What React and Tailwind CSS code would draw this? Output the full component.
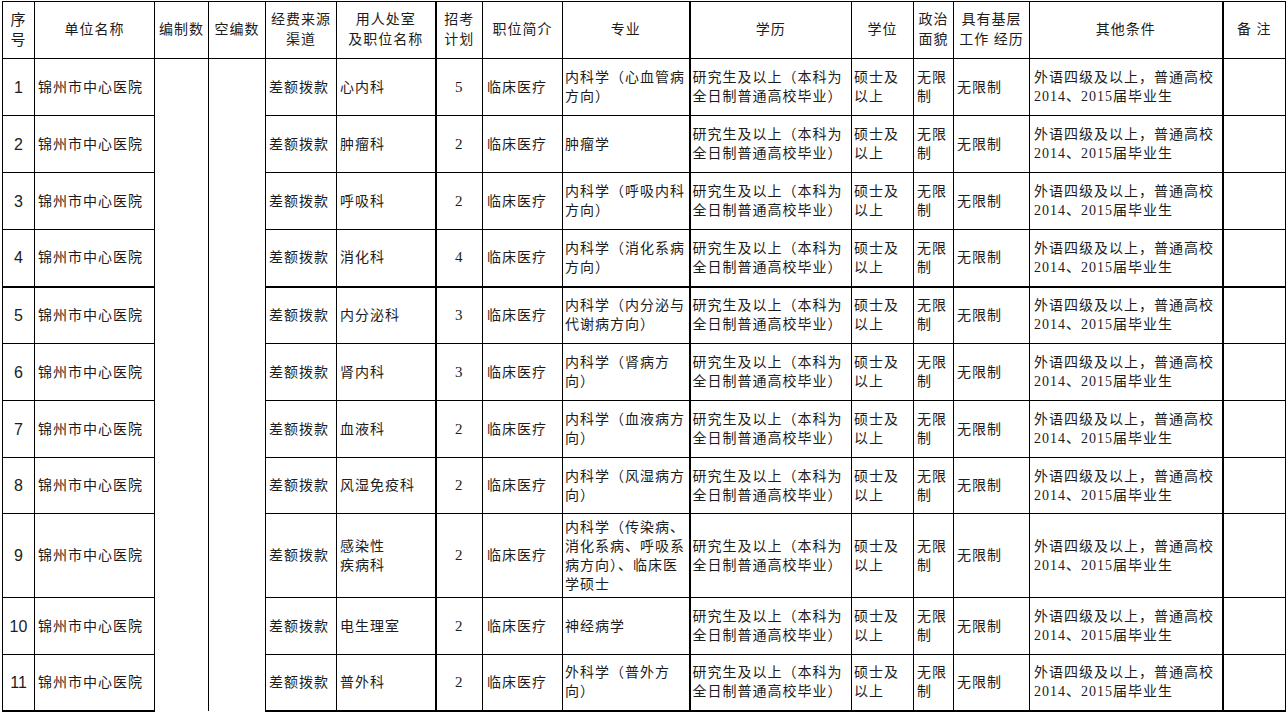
import React from "react";

const cjk = "font-['Liberation_Serif','Noto_Sans_CJK_SC',serif]";

const rows = [
  { dept: ["心内科"], plan: 5, major: ["内科学（心血管病", "方向）"] },
  { dept: ["肿瘤科"], plan: 2, major: ["肿瘤学"] },
  { dept: ["呼吸科"], plan: 2, major: ["内科学（呼吸内科", "方向）"] },
  { dept: ["消化科"], plan: 4, major: ["内科学（消化系病", "方向）"], thick: true },
  { dept: ["内分泌科"], plan: 3, major: ["内科学（内分泌与", "代谢病方向）"] },
  { dept: ["肾内科"], plan: 3, major: ["内科学（肾病方", "向）"] },
  { dept: ["血液科"], plan: 2, major: ["内科学（血液病方", "向）"] },
  { dept: ["风湿免疫科"], plan: 2, major: ["内科学（风湿病方", "向）"], h: "h-[56px]" },
  {
    dept: ["感染性", "疾病科"],
    plan: 2,
    major: ["内科学（传染病、", "消化系病、呼吸系", "病方向）、临床医", "学硕士"],
    h: "h-[84px]",
  },
  { dept: ["电生理室"], plan: 2, major: ["神经病学"] },
  { dept: ["普外科"], plan: 2, major: ["外科学（普外方", "向）"], last: true, h: "h-[56px]" },
];

function Lines({ items }) {
  return items.map((t, i) => <div key={i}>{t}</div>);
}

const th = "border border-black text-center align-middle font-normal leading-[20px] tracking-[1px] p-0";

export default function App() {
  return (
    <div className={`bg-white w-[1287px] h-[712px] overflow-hidden text-[#1c1c1c] ${cjk}`}>
      <table className="table-fixed border-collapse w-[1283px] ml-[2px] mt-[1px] text-[14px]">
        <colgroup>
          <col className="w-[32px]" />
          <col className="w-[120px]" />
          <col className="w-[54px]" />
          <col className="w-[57px]" />
          <col className="w-[71px]" />
          <col className="w-[99px]" />
          <col className="w-[47px]" />
          <col className="w-[80px]" />
          <col className="w-[127px]" />
          <col className="w-[162px]" />
          <col className="w-[62px]" />
          <col className="w-[40px]" />
          <col className="w-[76px]" />
          <col className="w-[193px]" />
          <col className="w-[63px]" />
        </colgroup>
        <thead>
          <tr className="h-[57px]">
            <th className={`${th} text-[15px]`}>序<br />号</th>
            <th className={th}>单位名称</th>
            <th className={th}>编制数</th>
            <th className={th}>空编数</th>
            <th className={th}>经费来源<br />渠道</th>
            <th className={`${th} border-r-2`}>用人处室<br />及职位名称</th>
            <th className={th}>招考<br />计划</th>
            <th className={th}>职位简介</th>
            <th className={`${th} border-r-2`}>专业</th>
            <th className={th}>学历</th>
            <th className={th}>学位</th>
            <th className={th}>政治<br />面貌</th>
            <th className={th}>具有基层<br />工作 经历</th>
            <th className={`${th} border-r-2`}>其他条件</th>
            <th className={th}>备 注</th>
          </tr>
        </thead>
        <tbody>
          {rows.map((r, i) => {
            const b = `border border-black align-middle leading-[19px] tracking-[1px] ${
              r.thick || r.last ? "border-b-2" : ""
            }`;
            return (
              <tr key={i} className={r.h || "h-[57px]"}>
                <td className={`${b} text-center font-['Liberation_Sans',sans-serif] text-[16px] tracking-normal`}>
                  {i + 1}
                </td>
                <td className={`${b} pl-[3px]`}>锦州市中心医院</td>
                {i === 0 && (
                  <>
                    <td rowSpan={11} className="border-l border-r border-black border-b-0" />
                    <td rowSpan={11} className="border-l border-r border-black border-b-0" />
                  </>
                )}
                <td className={`${b} pl-[3px]`}>差额拨款</td>
                <td className={`${b} pl-[3px] border-r-2`}>
                  <Lines items={r.dept} />
                </td>
                <td className={`${b} text-center font-['Liberation_Serif',serif] text-[15px]`}>{r.plan}</td>
                <td className={`${b} pl-[4px]`}>临床医疗</td>
                <td className={`${b} pl-[2px] border-r-2 whitespace-nowrap`}>
                  <Lines items={r.major} />
                </td>
                <td className={`${b} pl-[2px] whitespace-nowrap`}>
                  <div>研究生及以上（本科为</div>
                  <div>全日制普通高校毕业）</div>
                </td>
                <td className={`${b} pl-[2px]`}>
                  <div>硕士及</div>
                  <div>以上</div>
                </td>
                <td className={`${b} pl-[3px]`}>
                  <div>无限</div>
                  <div>制</div>
                </td>
                <td className={`${b} pl-[3px]`}>无限制</td>
                <td className={`${b} pl-[4px] border-r-2 whitespace-nowrap`}>
                  <div>外语四级及以上，普通高校</div>
                  <div>2014、2015届毕业生</div>
                </td>
                <td className={b} />
              </tr>
            );
          })}
        </tbody>
      </table>
    </div>
  );
}
